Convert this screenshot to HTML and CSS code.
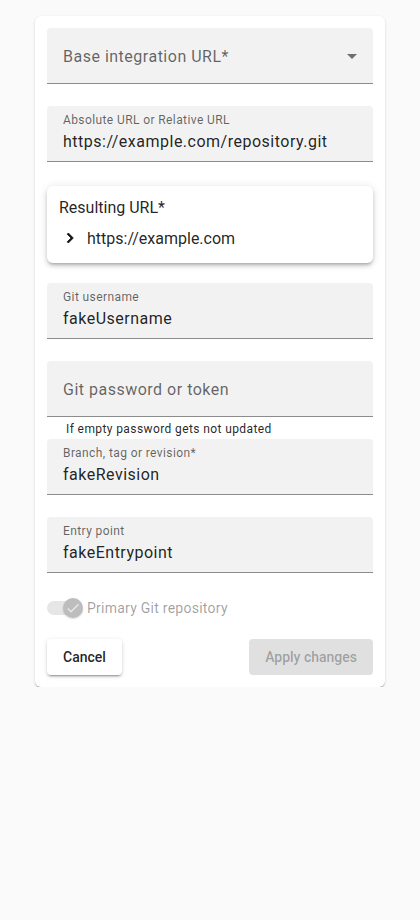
FILE: index.html
```html
<!DOCTYPE html>
<html lang="en">
<head>
<meta charset="utf-8">
<title>Git repository</title>
<link rel="stylesheet" href="styles.css">
</head>
<body>
<div class="page">
  <form class="card">
    <div class="field field-empty field-select">
      <span class="placeholder">Base integration URL*</span>
      <svg class="select-icon" viewBox="0 0 24 24" width="24" height="24"><path d="M7 10l5 5 5-5z"/></svg>
    </div>

    <div class="field gap-22">
      <span class="label">Absolute URL or Relative URL</span>
      <span class="value">https://example.com/repository.git</span>
    </div>

    <div class="result gap-24">
      <div class="result-title">Resulting URL*</div>
      <div class="result-row">
        <svg class="chevron" viewBox="0 0 24 24" width="20" height="20"><path d="M10 6 8.59 7.41 13.17 12l-4.58 4.59L10 18l6-6z"/></svg>
        <span>https://example.com</span>
      </div>
    </div>

    <div class="field gap-20">
      <span class="label">Git username</span>
      <span class="value">fakeUsername</span>
    </div>

    <div class="field field-empty gap-22">
      <span class="placeholder">Git password or token</span>
    </div>
    <div class="helper">If empty password gets not updated</div>

    <div class="field">
      <span class="label">Branch, tag or revision*</span>
      <span class="value">fakeRevision</span>
    </div>

    <div class="field gap-22">
      <span class="label">Entry point</span>
      <span class="value">fakeEntrypoint</span>
    </div>

    <div class="switch-row">
      <span class="switch">
        <span class="track"></span>
        <span class="thumb">
          <svg viewBox="0 0 24 24" width="16" height="16"><path d="M9 16.17 4.83 12l-1.42 1.41L9 19 21 7l-1.41-1.41z"/></svg>
        </span>
      </span>
      <span class="switch-label">Primary Git repository</span>
    </div>

    <div class="actions">
      <button type="button" class="btn btn-cancel">Cancel</button>
      <button type="button" class="btn btn-apply" disabled>Apply changes</button>
    </div>
  </form>
</div>
</body>
</html>
```

FILE: styles.css
```css
* { box-sizing: border-box; }

html, body {
  margin: 0;
  padding: 0;
  background: #fafafa;
  font-family: Roboto, "Liberation Sans", Arial, sans-serif;
  color: rgba(0, 0, 0, 0.87);
}

.page {
  padding-top: 16px;
  display: flex;
  justify-content: center;
}

.card {
  width: 350px;
  background: #fff;
  border-radius: 6px;
  box-shadow: 0 2px 1px -1px rgba(0,0,0,0.2), 0 1px 1px 0 rgba(0,0,0,0.14), 0 1px 3px 0 rgba(0,0,0,0.12);
  padding: 12px 12px 12px;
  display: flex;
  flex-direction: column;
  margin: 0;
}

.gap-20 { margin-top: 20px; }
.gap-22 { margin-top: 22px; }
.gap-24 { margin-top: 24px; }

.field {
  position: relative;
  height: 56px;
  background: #f2f2f2;
  border-radius: 4px 4px 0 0;
  border-bottom: 1px solid rgba(0, 0, 0, 0.42);
  padding: 6px 16px 0;
  display: flex;
  flex-direction: column;
}

.label {
  font-size: 12px;
  line-height: 17px;
  color: rgba(0, 0, 0, 0.6);
  letter-spacing: 0.4px;
}

.value {
  margin-top: 1px;
  font-size: 16px;
  line-height: 23px;
  letter-spacing: 0.5px;
  color: rgba(0, 0, 0, 0.87);
}

.field-empty {
  padding-top: 17px;
}

.placeholder {
  font-size: 16px;
  line-height: 23px;
  letter-spacing: 0.5px;
  color: rgba(0, 0, 0, 0.6);
}

.select-icon {
  position: absolute;
  right: 9px;
  top: 16px;
  fill: rgba(0, 0, 0, 0.54);
}

.result {
  background: #fff;
  border-radius: 6px;
  box-shadow: 0 3px 3px -2px rgba(0,0,0,0.2), 0 3px 4px 0 rgba(0,0,0,0.14), 0 1px 8px 0 rgba(0,0,0,0.12);
  padding: 11px 12px 12px;
  height: 77px;
}

.result-title {
  font-size: 16px;
  line-height: 22px;
  color: rgba(0, 0, 0, 0.87);
}

.result-row {
  margin-top: 7px;
  height: 24px;
  display: flex;
  align-items: center;
  gap: 7px;
  font-size: 16px;
}

.chevron {
  margin-left: 1px;
  fill: #111;
  stroke: #111;
  stroke-width: 0.9;
}

.helper {
  margin-top: 3px;
  padding-left: 19px;
  font-size: 12px;
  line-height: 19px;
  letter-spacing: 0.4px;
  color: rgba(0, 0, 0, 0.87);
}

.switch-row {
  margin-top: 16px;
  height: 38px;
  display: flex;
  align-items: center;
}

.switch {
  position: relative;
  width: 36px;
  height: 20px;
  flex: none;
}

.track {
  position: absolute;
  left: 0;
  top: 3px;
  width: 32px;
  height: 14px;
  border-radius: 7px;
  background: #e6e6e6;
}

.thumb {
  position: absolute;
  left: 16px;
  top: 0;
  width: 20px;
  height: 20px;
  border-radius: 50%;
  background: #bdbdbd;
  box-shadow: 0 1px 2px rgba(0,0,0,0.15);
  display: flex;
  align-items: center;
  justify-content: center;
}

.thumb svg { fill: #e8e8e8; }

.switch-label {
  margin-left: 4px;
  font-size: 14px;
  letter-spacing: 0.25px;
  color: rgba(0, 0, 0, 0.38);
}

.actions {
  margin-top: 12px;
  display: flex;
  justify-content: space-between;
}

.btn {
  height: 36px;
  padding: 0 16px;
  border: none;
  border-radius: 4px;
  font-family: Roboto, "Liberation Sans", Arial, sans-serif;
  font-size: 14px;
  font-weight: 500;
  letter-spacing: 0;
  cursor: pointer;
}

.btn-cancel {
  background: #fff;
  color: rgba(0, 0, 0, 0.87);
  box-shadow: 0 3px 1px -2px rgba(0,0,0,0.2), 0 2px 2px 0 rgba(0,0,0,0.14), 0 1px 5px 0 rgba(0,0,0,0.12);
}

.btn-apply {
  background: #e0e0e0;
  color: rgba(0, 0, 0, 0.3);
}
```
